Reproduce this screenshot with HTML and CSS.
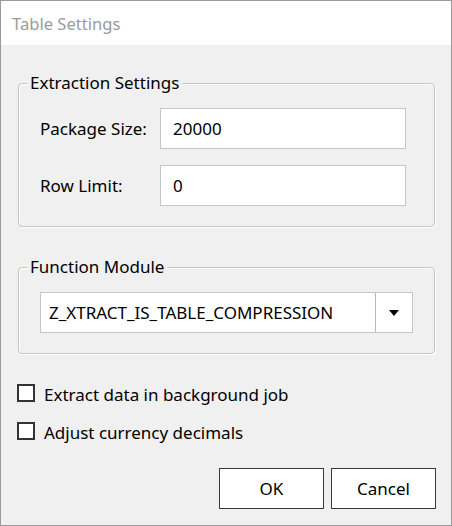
FILE: index.html
```html
<!DOCTYPE html>
<html>
<head>
<meta charset="utf-8">
<link rel="stylesheet" href="styles.css">
</head>
<body>
<div class="window">
  <div class="titlebar">Table Settings</div>
  <div class="content">
    <div class="group group-extraction">
      <span class="group-title">Extraction Settings</span>
      <div class="form-row">
        <span class="label">Package Size:</span>
        <div class="input">20000</div>
      </div>
      <div class="form-row">
        <span class="label">Row Limit:</span>
        <div class="input">0</div>
      </div>
    </div>
    <div class="group group-function">
      <span class="group-title">Function Module</span>
      <div class="combo">
        <div class="combo-value">Z_XTRACT_IS_TABLE_COMPRESSION</div>
        <div class="combo-button">
          <svg width="10" height="6" viewBox="0 0 10 6"><path d="M0 0H10L5 6Z" fill="#000"/></svg>
        </div>
      </div>
    </div>
    <div class="checks">
      <label class="check"><span class="box"></span><span>Extract data in background job</span></label>
      <label class="check"><span class="box"></span><span>Adjust currency decimals</span></label>
    </div>
    <div class="buttons">
      <div class="btn">OK</div>
      <div class="btn">Cancel</div>
    </div>
  </div>
</div>
</body>
</html>
```

FILE: styles.css
```css
html, body {
  margin: 0;
  padding: 0;
  background: #ffffff;
}
.window {
  width: 452px;
  height: 526px;
  box-sizing: border-box;
  border: 1px solid #9a9a9a;
  background: #f0f0f0;
  display: flex;
  flex-direction: column;
  font-family: "Noto Sans", sans-serif;
  font-size: 17px;
  color: #000;
}
.titlebar {
  height: 44px;
  flex: none;
  background: #ffffff;
  padding-left: 11px;
  display: flex;
  align-items: center;
  color: #9b9b9b;
  font-size: 16.6px;
}
.content {
  flex: 1;
  display: flex;
  flex-direction: column;
  padding: 0 16px 0 17px;
}
.group {
  border: 1px solid #c6c6c6;
  border-radius: 4px;
  box-shadow: inset 1px 1px 0 #ffffff, 1px 1px 0 #ffffff;
  display: flex;
  flex-direction: column;
  padding: 0 21px 20px 21px;
}
.group-extraction {
  margin-top: 38px;
}
.group-function {
  margin-top: 40px;
}
.group-title {
  align-self: flex-start;
  margin-top: -12px;
  margin-left: -13px;
  padding: 0 3px;
  line-height: 22px;
  height: 22px;
  background: #f0f0f0;
}
.form-row {
  display: flex;
  align-items: center;
  padding-right: 7px;
  margin-top: 14px;
}
.form-row + .form-row {
  margin-top: 16px;
}
.label {
  width: 120px;
  flex: none;
}
.input {
  flex: 1;
  height: 41px;
  box-sizing: border-box;
  border: 1px solid #c6c6c6;
  background: #ffffff;
  display: flex;
  align-items: center;
  padding-left: 12px;
}
.combo {
  margin-top: 14px;
  height: 41px;
  box-sizing: border-box;
  border: 1px solid #c6c6c6;
  background: #ffffff;
  display: flex;
}
.combo-value {
  flex: 1;
  display: flex;
  align-items: center;
  padding-left: 8px;
  border-right: 1px solid #b8b8b8;
}
.combo-button {
  width: 36px;
  flex: none;
  display: flex;
  align-items: center;
  justify-content: center;
}
.checks {
  margin-top: 27px;
  margin-left: -1px;
  display: flex;
  flex-direction: column;
  gap: 14px;
}
.check {
  display: flex;
  align-items: center;
  height: 24px;
  gap: 9px;
}
.check span:last-child {
  position: relative;
  top: 1px;
}
.box {
  width: 18px;
  height: 18px;
  box-sizing: border-box;
  border: 2px solid #333333;
  background: #ffffff;
  flex: none;
}
.buttons {
  margin-top: 25px;
  margin-right: -1px;
  display: flex;
  justify-content: flex-end;
  gap: 7px;
}
.btn {
  width: 105px;
  height: 41px;
  box-sizing: border-box;
  border: 1px solid #3c3c3c;
  background: #ffffff;
  display: flex;
  align-items: center;
  justify-content: center;
}
```
